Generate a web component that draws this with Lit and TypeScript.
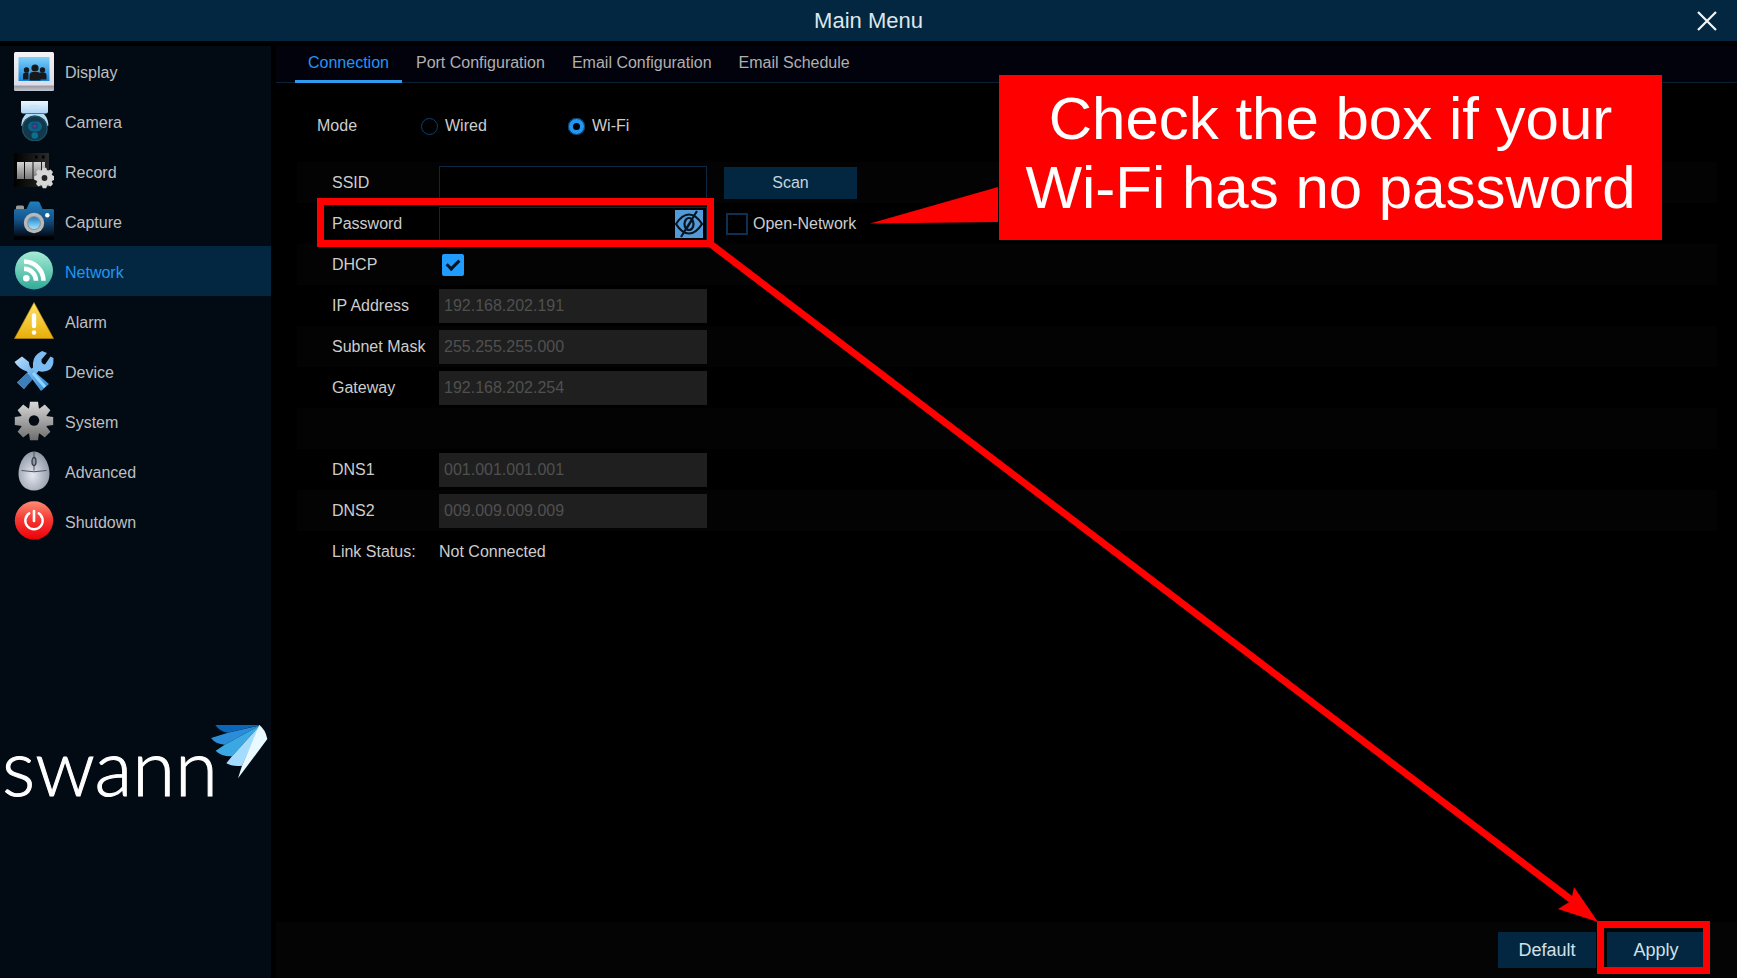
import { LitElement, html, svg, css } from "lit";
import { customElement, state } from "lit/decorators.js";
import { classMap } from "lit/directives/class-map.js";

const gearTeeth = (cx: number, cy: number, inner: number, outer: number, half: number) =>
  [0, 45, 90, 135, 180, 225, 270, 315].map(
    (a) => svg`<path d="M${cx - half - 1} ${cy - inner} L${cx - half} ${cy - outer} H${cx + half} L${cx + half + 1} ${cy - inner} Z" transform="rotate(${a} ${cx} ${cy})"></path>`
  );

const icons: Record<string, unknown> = {
  Display: svg`
    <defs>
      <linearGradient id="d1" x1="0" y1="0" x2="0" y2="1"><stop offset="0" stop-color="#f4f4f8"/><stop offset=".84" stop-color="#dcdce6"/><stop offset=".88" stop-color="#9a9ca8"/><stop offset="1" stop-color="#c4c6ce"/></linearGradient>
      <linearGradient id="d2" x1="0" y1="0" x2="0" y2="1"><stop offset="0" stop-color="#7fd0fa"/><stop offset="1" stop-color="#1583d8"/></linearGradient>
    </defs>
    <rect x="0" y="1" width="40" height="39" rx="1.5" fill="url(#d1)"/>
    <rect x="4.500" y="6" width="31" height="24" fill="url(#d2)"/>
    <g fill="#16181c"><circle cx="21" cy="17" r="3.600"/><path d="M15.500 29.500v-5q0-3.500 3.500-3.500h4q3.500 0 3.500 3.500v5z"/><circle cx="12.500" cy="19" r="2.700"/><circle cx="28.500" cy="19" r="2.700"/><path d="M9 28.500v-4q0-3 2.500-3h3v7zM25.500 28.500v-7h4q3 0 3 3v4z"/></g>`,
  Camera: svg`
    <defs><linearGradient id="c1" x1="0" y1="0" x2="0" y2="1"><stop offset="0" stop-color="#ecf6ff"/><stop offset="1" stop-color="#a9d3f2"/></linearGradient></defs>
    <path d="M7 0h27v10.500q0 2-2 2h-23q-2 0-2-2z" fill="url(#c1)"/>
    <path d="M12 13h18q4.500 5 4.300 12h-27q0-8 4.700-12z" fill="#b4dbf4"/>
    <circle cx="20.800" cy="27.500" r="13" fill="#12384a"/>
    <circle cx="20.800" cy="27.500" r="12.300" fill="none" stroke="#1d5970"/>
    <rect x="14" y="20.500" width="14" height="10" rx="5" fill="#0b6488"/>
    <circle cx="20.800" cy="25" r="3.400" fill="#174b7c"/><circle cx="20.800" cy="25" r="1.300" fill="#96277f"/>
    <circle cx="20.800" cy="34.500" r="3.300" fill="#0a7091"/>
    <path d="M16 5h9" stroke="#c8e2fa" stroke-width="1.500"/>`,
  Record: svg`
    <defs><linearGradient id="r1" x1="0" y1="0" x2="0" y2="1"><stop offset="0" stop-color="#d4d4d4"/><stop offset="1" stop-color="#777"/></linearGradient>
    <linearGradient id="r2" x1="0" y1="0" x2="1" y2="0"><stop offset="0" stop-color="#000"/><stop offset="1" stop-color="#2b2b2b"/></linearGradient></defs>
    <rect x="0" y="2" width="35" height="34" fill="url(#r2)"/>
    <path d="M3 11h7v17h-7zM11 11h7.500v17h-7.500zM19.500 11h7.500v17h-7.500z M28 11h3v12h-3z" fill="url(#r1)"/>
    <path d="M21 6h2.500M28 6h2.500" stroke="#000" stroke-width="3"/>
    <g fill="#d6d6d6">${gearTeeth(30.5, 27, 7.5, 10.3, 1.7)}<circle cx="30.500" cy="27" r="8.300"/></g>
    <circle cx="30.500" cy="27" r="2.900" fill="#222"/>`,
  Capture: svg`
    <defs><linearGradient id="p1" x1="0" y1="0" x2="0" y2="1"><stop offset="0" stop-color="#2180bf"/><stop offset=".5" stop-color="#14558c"/><stop offset="1" stop-color="#020a14"/></linearGradient>
    <linearGradient id="p2" x1="0" y1="0" x2="0" y2="1"><stop offset="0" stop-color="#2180c8"/><stop offset="1" stop-color="#9ee6ff"/></linearGradient></defs>
    <rect x="0" y="35" width="40" height="4" fill="#000"/>
    <rect x="2" y="4.500" width="8" height="5" rx="1.500" fill="#9a9a9a"/>
    <path d="M0 9.500q0-1.500 1.500-1.500h11l3-6.500q.5-1 1.500-1h7q1 0 1.500 1l3 6.500h10q1.500 0 1.500 1.500v26h-40z" fill="url(#p1)"/>
    <circle cx="20" cy="22" r="10.200" fill="#b8b8b8"/><circle cx="20" cy="22" r="7" fill="#8e9296"/><circle cx="20" cy="22" r="6" fill="url(#p2)"/>
    <circle cx="33.300" cy="14.300" r="2.200" fill="#fff"/>`,
  Network: svg`
    <defs><linearGradient id="n1" x1="0" y1="0" x2="0" y2="1"><stop offset="0" stop-color="#a6ecd6"/><stop offset="1" stop-color="#31ab98"/></linearGradient></defs>
    <circle cx="20" cy="19.500" r="19" fill="url(#n1)"/>
    <circle cx="12.300" cy="27.300" r="3.300" fill="#fff"/>
    <path d="M9 18.300a12 12 0 0 1 12 12M9 11a19.500 19.500 0 0 1 19.500 19.300" transform="translate(1 -.5)" fill="none" stroke="#fff" stroke-width="4.600"/>`,
  Alarm: svg`
    <defs><linearGradient id="a1" x1="0" y1="0" x2="0" y2="1"><stop offset="0" stop-color="#fde26a"/><stop offset="1" stop-color="#e8ae08"/></linearGradient></defs>
    <path d="M20 1.500L39.500 37.500H.5Z" fill="url(#a1)" stroke="#c48c0a" stroke-width=".6"/>
    <path d="M20 14.500v10.500" stroke="#fff" stroke-width="4.400" stroke-linecap="round"/><circle cx="20" cy="31.500" r="2.300" fill="#fff"/>`,
  Device: svg`
    <defs><linearGradient id="v1" x1="0" y1="0" x2="1" y2="1"><stop offset="0" stop-color="#c0e2ff"/><stop offset=".5" stop-color="#6db0ea"/><stop offset="1" stop-color="#2b8ad8"/></linearGradient></defs>
    <path d="M3 31.500L19 16.500Q18 7 24 2.500L28 0L33 2L27.500 8.500Q27 13 31 13.500L36.500 5.500L39.500 7Q40 17 34 19.500Q29 21.500 24.500 20L10 38Z" fill="#7dbcf0"/>
    <path d="M3 31.500L13 22L20 27L10 38Z" fill="#3b80bd"/>
    <path d="M.5 11L8 5.500L15 11Q15 16 18 18L22 22L35 33L27 40L17 26.500L13 20.500Q5 18 .5 11Z" fill="url(#v1)"/>
    <path d="M19 22L31 36" stroke="#8ed4ff" stroke-width="3"/>`,
  System: svg`
    <defs><linearGradient id="s1" gradientUnits="userSpaceOnUse" x1="0" y1="1" x2="0" y2="39"><stop offset="0" stop-color="#d8d8d8"/><stop offset="1" stop-color="#6e6e6e"/></linearGradient></defs>
    <mask id="gear"><g fill="#fff">${gearTeeth(20, 20, 12, 19.2, 4)}<circle cx="20" cy="20" r="13.500"/></g><circle cx="20" cy="19.500" r="5.200" fill="#000"/></mask>
    <rect width="40" height="40" fill="url(#s1)" mask="url(#gear)"/>`,
  Advanced: svg`
    <defs><radialGradient id="m1" cx=".45" cy=".6" r=".65"><stop offset="0" stop-color="#e4e8f0"/><stop offset="1" stop-color="#8990a0"/></radialGradient></defs>
    <path d="M20 .5C29 .5 35.500 12 35.500 23C35.500 33 29 39.500 20 39.500S4.500 33 4.500 23C4.500 12 11 .5 20 .5Z" fill="url(#m1)"/>
    <path d="M7.500 19.500Q20 22 32.500 19.500M20 1v5M20 15v4.500" fill="none" stroke="#4c535f" stroke-width="1"/>
    <ellipse cx="20" cy="10.500" rx="2" ry="4" fill="#8f97a5" stroke="#353c47" stroke-width="1.300"/>`,
  Shutdown: svg`
    <defs><linearGradient id="o1" x1="0" y1="0" x2="0" y2="1"><stop offset="0" stop-color="#fd8d76"/><stop offset=".45" stop-color="#f43a34"/><stop offset="1" stop-color="#ec0008"/></linearGradient></defs>
    <circle cx="20" cy="19.500" r="19.200" fill="url(#o1)"/>
    <path d="M15.300 12.300a8.700 8.700 0 1 0 9.400 0" fill="none" stroke="#fff" stroke-width="2.400" stroke-linecap="round"/>
    <path d="M20 10v10" stroke="#fff" stroke-width="2.600" stroke-linecap="round"/>`,
};

const menu = ["Display", "Camera", "Record", "Capture", "Network", "Alarm", "Device", "System", "Advanced", "Shutdown"];
const tabs = ["Connection", "Port Configuration", "Email Configuration", "Email Schedule"];

@customElement("side-menu")
class SideMenu extends LitElement {
  static styles = css`
    :host { display: flex; flex-direction: column; background: #020b13; }
    ul { list-style: none; margin: 0; padding: 0; }
    a { display: flex; align-items: center; gap: 11px; height: 50px; padding-left: 14px; box-sizing: border-box; font-size: 16px; color: #bebfc0; text-decoration: none; }
    a span { padding-top: 3px; }
    a.active { background: #032740; color: #2196f3; }
    .icon { width: 40px; height: 40px; flex: none; }
    .logo { display: flex; align-items: flex-start; margin: 178px 3px 0 2px; }
    .word { flex: 1; font-family: Lato, "Liberation Sans", sans-serif; font-weight: 300; font-size: 78px; line-height: 84px; color: #fff; -webkit-text-stroke: 1px #fff; }
    .wing { flex: none; width: 58px; height: 55px; margin-left: -8px; }
  `;
  render() {
    return html`
      <nav aria-label="Main"><ul>
        ${menu.map((m) => html`<li><a href="#${m.toLowerCase()}" class=${classMap({ active: m === "Network" })}>
          <svg class="icon" viewBox="0 0 40 40" aria-hidden="true">${icons[m]}</svg><span>${m}</span></a></li>`)}
      </ul></nav>
      <div class="logo">
        <span class="word">swann</span>
        <svg class="wing" viewBox="0 0 174 165" aria-hidden="true">
          <path d="M16 3H152L54 26Q30 24 16 3Z" fill="#0a66b8"/>
          <path d="M150 4L54 26L3 42Q16 60 44 62Z" fill="#2b8cd8"/>
          <path d="M150 4L44 62L17 80Q34 98 66 97Z" fill="#3aa8e2"/>
          <path d="M150 4L66 97L49 118Q66 128 96 125Z" fill="#a4dcff"/>
          <path d="M148 3Q166 16 172 45L84 163L96 125Z" fill="#e8faff"/>
        </svg>
      </div>`;
  }
}

@customElement("network-form")
class NetworkForm extends LitElement {
  static styles = css`
    :host { display: block; padding: 0 20px 0 21px; font-size: 16px; color: #cdcdcd; }
    .mode { display: flex; align-items: center; height: 22px; margin: 0; padding: 32px 0 25px 20px; border: 0; }
    .mode-name { width: 104px; }
    .choice { display: flex; align-items: center; gap: 7px; width: 147px; }
    input { font: inherit; margin: 0; box-sizing: border-box; border-radius: 0; }
    input[type="radio"] { appearance: none; width: 17px; height: 17px; border: 1px solid #104068; border-radius: 50%; }
    input[type="radio"]:checked { border: 5px solid #2196f3; outline: 1px solid #0b3557; outline-offset: -1px; background: #000; }
    .row { display: flex; align-items: center; height: 34px; padding: 4px 0 3px 35px; }
    .row:nth-of-type(odd) { background: #030303; }
    .name { width: 107px; padding-bottom: 1px; }
    .field { position: relative; display: flex; width: 268px; }
    .text { width: 268px; height: 34px; padding: 0 5px; background: #000; color: #cdcdcd; border: 1px solid #0b2742; }
    .text:disabled { background: #1f1f1f; border-color: #1f1f1f; color: #505050; padding-left: 4px; }
    .eye { position: absolute; right: 4px; top: 3px; width: 28px; height: 28px; padding: 0; border: 0; background: #539bd8; }
    .eye svg { display: block; }
    .scan { width: 133px; height: 32px; margin-left: 17px; padding: 0; border: 0; background: #032740; color: #c6d3dc; font: inherit; }
    .open { display: flex; align-items: center; gap: 5px; margin-left: 19px; }
    input[type="checkbox"] { appearance: none; width: 22px; height: 22px; border: 2px solid #0d2f50; background: #000; display: grid; place-items: center; }
    input[type="checkbox"]:checked { border: 0; border-radius: 2px; background: #209cff; }
    input[type="checkbox"]:checked::after { content: ""; width: 5px; height: 10px; margin-bottom: 4px; border: solid #06121c; border-width: 0 3px 3px 0; transform: rotate(45deg); }
    .dhcp { margin-left: 3px; }
  `;
  private address(id: string, name: string, value: string) {
    return html`<div class="row"><label class="name" for=${id}>${name}</label><input class="text" id=${id} .value=${value} disabled /></div>`;
  }
  render() {
    return html`
      <form @submit=${(e: Event) => e.preventDefault()}>
        <fieldset class="mode" aria-label="Mode">
          <span class="mode-name">Mode</span>
          <label class="choice"><input type="radio" name="mode" />Wired</label>
          <label class="choice"><input type="radio" name="mode" checked />Wi-Fi</label>
        </fieldset>
        <div class="row">
          <label class="name" for="ssid">SSID</label>
          <input class="text" id="ssid" />
          <button class="scan" type="button">Scan</button>
        </div>
        <div class="row">
          <label class="name" for="password">Password</label>
          <span class="field">
            <input class="text" id="password" type="password" />
            <button class="eye" type="button" aria-label="Show password">
              <svg width="28" height="28" viewBox="0 0 28 28" fill="none" stroke="#07131f" stroke-width="2.200">
                <path d="M1 14Q7 4.500 14 4.500T27 14Q21 23.500 14 23.500T1 14Z"/><ellipse cx="14" cy="14" rx="4.500" ry="6"/><path d="M22 1L6 27M17 10L12 18"/>
              </svg>
            </button>
          </span>
          <label class="open"><input type="checkbox" />Open-Network</label>
        </div>
        <div class="row">
          <label class="name" for="dhcp">DHCP</label>
          <input class="dhcp" id="dhcp" type="checkbox" checked />
        </div>
        ${this.address("ip", "IP Address", "192.168.202.191")}
        ${this.address("mask", "Subnet Mask", "255.255.255.000")}
        ${this.address("gateway", "Gateway", "192.168.202.254")}
        <div class="row"></div>
        ${this.address("dns1", "DNS1", "001.001.001.001")}
        ${this.address("dns2", "DNS2", "009.009.009.009")}
        <div class="row"><span class="name">Link Status:</span><output>Not Connected</output></div>
      </form>`;
  }
}

@customElement("help-notes")
class HelpNotes extends LitElement {
  static styles = css`
    :host { position: absolute; inset: 0; pointer-events: none; overflow: hidden; }
    .frame { position: absolute; box-sizing: border-box; border: 7px solid #f00; }
    .password { left: 317px; top: 198px; width: 397px; height: 49px; }
    .apply { right: 27px; bottom: 4px; width: 113px; height: 53px; }
    .arrow { position: absolute; left: 0; top: 0; }
    .callout { position: absolute; left: 999px; top: 75px; width: 663px; height: 165px; box-sizing: border-box; padding-top: 9px; margin: 0; background: #f00; color: #fff; font-size: 60px; line-height: 69px; text-align: center; }
  `;
  render() {
    return html`
      <svg class="arrow" width="1737" height="978" viewBox="0 0 1737 978" fill="#f00" aria-hidden="true">
        <path d="M708 242L1573 901" stroke="#f00" stroke-width="7"/>
        <path d="M1598 922L1574 887L1571 901L1558 909Z"/>
        <path d="M870 223.500L998 187V222Z"/>
      </svg>
      <div class="frame password"></div>
      <div class="frame apply"></div>
      <p class="callout">Check the box if your<br />Wi-Fi has no password</p>`;
  }
}

@customElement("app-root")
class AppRoot extends LitElement {
  static styles = css`
    :host { position: relative; display: flex; flex-direction: column; min-height: 100vh; background: #000; font-family: "Liberation Sans", Arial, sans-serif; }
    header { display: grid; grid-template-columns: 60px 1fr 60px; align-items: center; height: 41px; background: #032740; }
    h1 { grid-column: 2; margin: 0; font-size: 22px; font-weight: 400; line-height: 41px; text-align: center; color: #dde6ec; }
    .close { justify-self: center; width: 20px; height: 20px; padding: 0; border: 0; background: none; }
    .close svg { display: block; }
    .body { flex: 1; display: grid; grid-template-columns: 271px 1fr; gap: 5px; padding-top: 5px; }
    main { display: flex; flex-direction: column; }
    .tabs { display: flex; gap: 1px; height: 37px; box-sizing: border-box; padding-left: 19px; background: #02020c; border-bottom: 1px solid #0c2131; }
    .tab { padding: 0 13px; margin-bottom: -1px; border: 0; border-bottom: 3px solid transparent; background: none; font: inherit; font-size: 16px; color: #b0b0b0; }
    .tab.on { color: #2196f3; border-bottom-color: #2e9bf0; }
    network-form { flex: 1; }
    footer { display: flex; justify-content: flex-end; align-items: center; gap: 11px; height: 56px; padding-right: 32px; background: #040404; }
    .action { width: 98px; height: 36px; padding: 0; border: 0; background: #032740; color: #d4e0e8; font: inherit; font-size: 18px; }
  `;
  @state() private tab = "Connection";
  render() {
    return html`
      <header>
        <h1>Main Menu</h1>
        <button class="close" aria-label="Close"><svg width="20" height="20" viewBox="0 0 20 20"><path d="M1 1L19 19M19 1L1 19" stroke="#f2f6f8" stroke-width="2.200"/></svg></button>
      </header>
      <div class="body">
        <side-menu></side-menu>
        <main>
          <div class="tabs" role="tablist">
            ${tabs.map((t) => html`<button role="tab" aria-selected=${t === this.tab} class=${classMap({ tab: true, on: t === this.tab })} @click=${() => (this.tab = t)}>${t}</button>`)}
          </div>
          <network-form></network-form>
          <footer><button class="action">Default</button><button class="action">Apply</button></footer>
        </main>
      </div>
      <help-notes></help-notes>`;
  }
}
